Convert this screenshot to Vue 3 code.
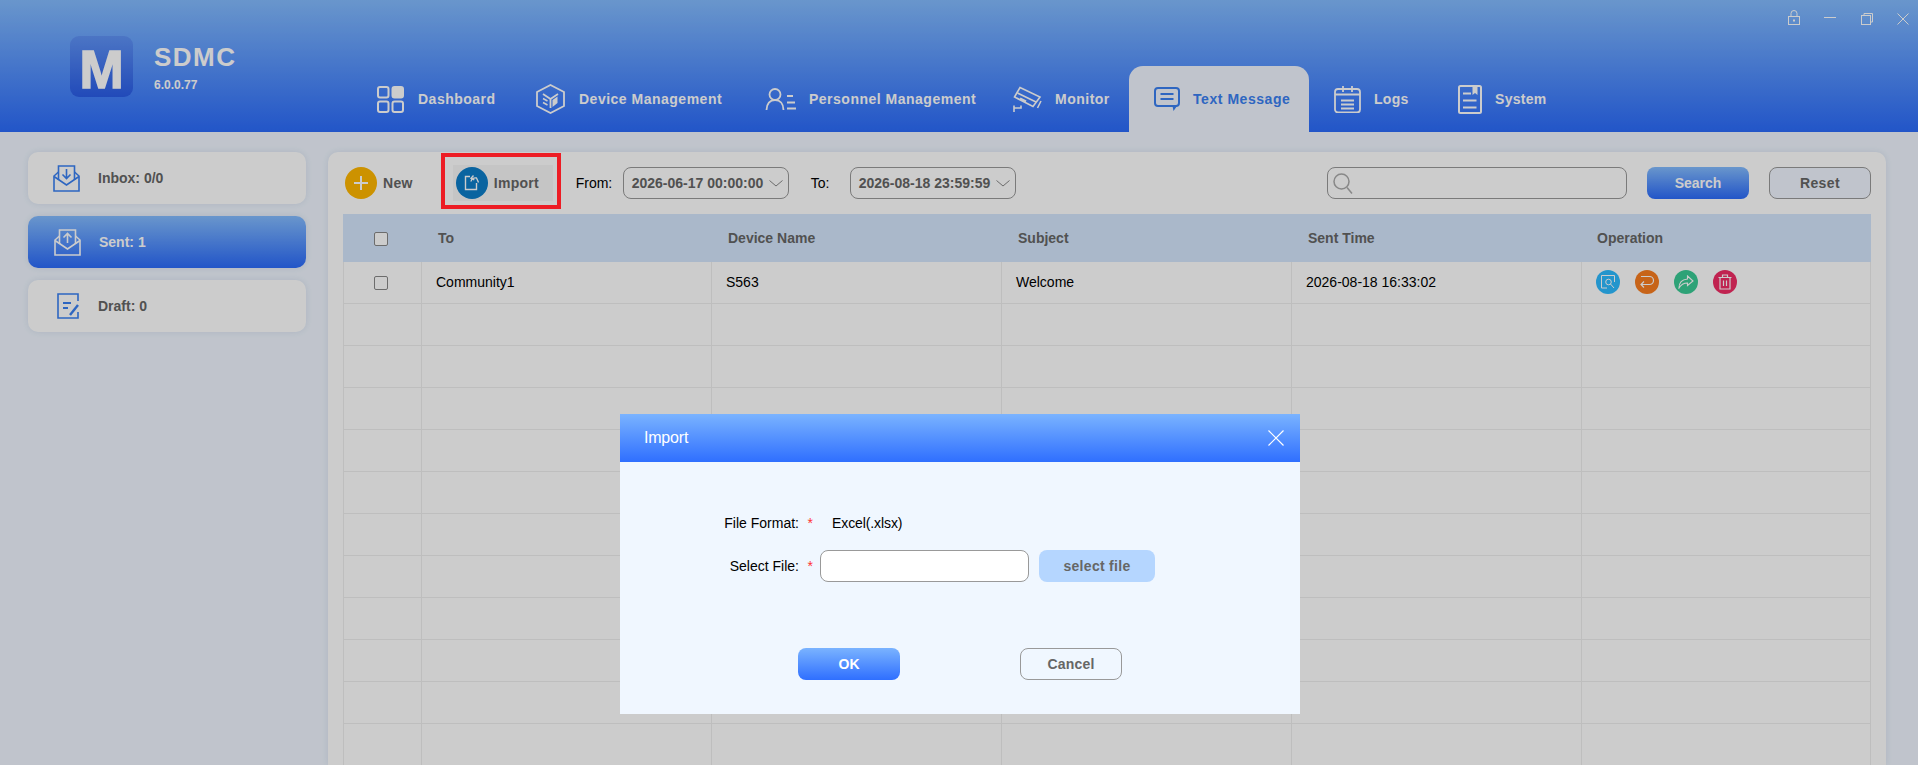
<template>
  <div class="app">
    <header class="top">
      <div class="brand">
        <div class="logo">M</div>
        <div class="brand-text">
          <div class="brand-name">SDMC</div>
          <div class="brand-ver">6.0.0.77</div>
        </div>
      </div>
      <div class="top-right">
        <div class="win">
          <svg width="12" height="15" viewBox="0 0 12 15" fill="none" stroke="currentColor"><rect x=".5" y="6.5" width="11" height="8" /><path d="M3 6.5V3.5a3 3 0 016 0v3" /><rect x="5" y="9.5" width="2" height="2" fill="currentColor" stroke="none" /></svg>
          <svg class="w-min" width="12" height="15" viewBox="0 0 12 15" fill="none" stroke="currentColor"><path d="M0 7.5h12" /></svg>
          <svg class="w-max" width="12" height="12" viewBox="0 0 12 12" fill="none" stroke="currentColor"><rect x=".5" y="2.5" width="9" height="9" /><path d="M3 2.500V.5h8.500V9H9.500" /></svg>
          <svg class="w-close" width="12" height="12" viewBox="0 0 12 12" fill="none" stroke="currentColor"><path d="M.5.500l11 11M11.500.500l-11 11" /></svg>
        </div>
        <nav class="nav">
          <a class="tab">
            <svg class="dash" width="27" height="27" viewBox="0 0 27 27" fill="none" stroke="currentColor" stroke-width="2"><rect x="1" y="1" width="10.500" height="10.500" rx="2" /><rect x="15.500" y="1" width="10.500" height="10.500" rx="2" fill="currentColor" /><rect x="1" y="15.500" width="10.500" height="10.500" rx="2" /><rect x="15.500" y="15.500" width="10.500" height="10.500" rx="2" /></svg>
            <span>Dashboard</span>
          </a>
          <a class="tab">
            <svg width="31" height="30" viewBox="0 0 31 30" fill="none" stroke="currentColor" stroke-width="1.800"><path d="M15.500 1L29 8v14l-13.500 7L2 22V8z" /><path d="M15.500 24v-9L23 10M15.500 15L8 10" /><path d="M17.500 16l5-3.500v6.500l-5 4z" fill="currentColor" stroke="none" /><path d="M8 14.500l4.500 2.500M8 18.500l4.500 2.500" stroke-width="1.500" /></svg>
            <span>Device Management</span>
          </a>
          <a class="tab">
            <svg width="31" height="22" viewBox="0 0 31 22" fill="none" stroke="currentColor" stroke-width="1.800"><circle cx="10" cy="6.500" r="5.500" /><path d="M1.500 22c0-6.500 3.500-10 8.500-10s8.500 3.500 8.500 10" /><path d="M22 8h6M22 14.500h8M22 20.500h9" stroke-width="2" /></svg>
            <span>Personnel Management</span>
          </a>
          <a class="tab">
            <svg width="29" height="26" viewBox="0 0 29 26" fill="none" stroke="currentColor" stroke-width="1.600"><path d="M7 1.500L27 11l-7 9.500L1.500 11z" /><path d="M4.500 7L23 16" /><path d="M7 12.500l6 3" stroke-width="2.500" /><path d="M1 19.500V26M1 22h7v-2.500M28 15l-3.500 7" /></svg>
            <span>Monitor</span>
          </a>
          <a class="tab active">
            <svg width="26" height="24" viewBox="0 0 26 24" fill="none" stroke="currentColor" stroke-width="2"><rect x="1" y="1" width="24" height="18" rx="3" /><path d="M6.500 7h13M6.500 12h13" /><path d="M15 19h8l-3.500 5-1-5z" fill="currentColor" stroke="none" /></svg>
            <span>Text Message</span>
          </a>
          <a class="tab">
            <svg width="27" height="27" viewBox="0 0 27 27" fill="none" stroke="currentColor" stroke-width="1.800"><rect x="1" y="3" width="25" height="23.500" rx="3" /><path d="M1 8.500h25M9 0v6M18 0v6M7 14.500h13M7 18.500h13M7 22.500h13" /></svg>
            <span>Logs</span>
          </a>
          <a class="tab">
            <svg width="24" height="29" viewBox="0 0 24 29" fill="none" stroke="currentColor" stroke-width="2"><rect x="1" y="1" width="22" height="27" rx="1.500" /><path d="M5 8.500h8M5 15.500h13.500M5 22.500h13.500" /><path d="M14.500 1h5v9l-2.500-2-2.500 2z" fill="currentColor" stroke="none" /></svg>
            <span>System</span>
          </a>
        </nav>
      </div>
    </header>

    <main class="page">
      <aside class="side">
        <div class="side-item">
          <svg class="side-ico" width="27" height="27" viewBox="0 0 27 27" fill="none" stroke="currentColor" stroke-width="1.600"><path d="M5.500 15V1h16v14" /><path d="M5.500 7L1 11v15h25V11l-4.500-4" /><path d="M1 11.500L13.500 20 26 11.500" /><path d="M13.500 4v9M9.500 9.500l4 4 4-4" /></svg>
          <span>Inbox: 0/0</span>
        </div>
        <div class="side-item on">
          <svg class="side-ico" width="27" height="27" viewBox="0 0 27 27" fill="none" stroke="currentColor" stroke-width="1.600"><path d="M5.500 15V1h16v14" /><path d="M5.500 7L1 11v15h25V11l-4.500-4" /><path d="M1 11.500L13.500 20 26 11.500" /><path d="M13.500 14V5M9.500 8.500l4-4 4 4" /></svg>
          <span>Sent: 1</span>
        </div>
        <div class="side-item">
          <svg class="side-ico draft" width="22" height="26" viewBox="0 0 22 26" fill="none" stroke="currentColor" stroke-width="1.600"><path d="M21 8V1H1v24h20v-6" /><path d="M6 10h8M6 15h5" stroke-width="2" /><path d="M13 22l8-10" stroke-width="2.400" /></svg>
          <span>Draft: 0</span>
        </div>
      </aside>

      <section class="card">
        <div class="toolbar">
          <div class="tool">
            <span class="circle new">
              <svg width="16" height="16" viewBox="0 0 16 16" stroke="currentColor" stroke-width="2"><path d="M8 1v14M1 8h14" /></svg>
            </span>
            <span>New</span>
          </div>
          <div class="tool import">
            <span class="circle imp">
              <svg width="18" height="18" viewBox="0 0 18 18" fill="none" stroke="currentColor" stroke-width="1.400"><path d="M7 2.500H2.500v13h11V9" /><path d="M8 7.500C8.500 4.500 11 3.500 13.500 4l2 4.500" /><path d="M10.500 1.500L8 4.200l3.300 1.800" /></svg>
            </span>
            <span>Import</span>
            <i class="mark"></i>
          </div>
          <label class="lbl from">From:</label>
          <div class="date">
            <span>2026-06-17 00:00:00</span>
            <svg width="14" height="7" viewBox="0 0 14 7" fill="none" stroke="currentColor"><path d="M.5.500L7 6l6.500-5.500" /></svg>
          </div>
          <label class="lbl to">To:</label>
          <div class="date">
            <span>2026-08-18 23:59:59</span>
            <svg width="14" height="7" viewBox="0 0 14 7" fill="none" stroke="currentColor"><path d="M.5.500L7 6l6.500-5.500" /></svg>
          </div>
          <div class="search">
            <svg width="20" height="21" viewBox="0 0 20 21" fill="none" stroke="currentColor" stroke-width="1.500"><circle cx="8.500" cy="8.500" r="7.500" /><path d="M14 14.500l5 6" /></svg>
          </div>
          <button class="btn primary">Search</button>
          <button class="btn plain">Reset</button>
        </div>

        <table class="grid">
          <colgroup>
            <col style="width:79px" />
            <col v-for="c in columns" :key="c" :style="{ width: c === 'Operation' ? '289px' : '290px' }" />
          </colgroup>
          <thead>
            <tr>
              <th class="chk"><i class="box"></i></th>
              <th v-for="c in columns" :key="c">{{ c }}</th>
            </tr>
          </thead>
          <tbody>
            <tr>
              <td class="chk"><i class="box"></i></td>
              <td>Community1</td>
              <td>S563</td>
              <td>Welcome</td>
              <td>2026-08-18 16:33:02</td>
              <td>
                <div class="ops">
                  <span class="op blue">
                    <svg width="14" height="14" viewBox="0 0 14 14" fill="none" stroke="currentColor"><path d="M6 13H.5V.5h13V7" /><circle cx="7.500" cy="7" r="2.800" /><path d="M9.500 9l3.500 4" /></svg>
                  </span>
                  <span class="op orange">
                    <svg width="16" height="14" viewBox="0 0 16 14" fill="none" stroke="currentColor" stroke-width="1.200"><path d="M2 1.500h8.500a4 4 0 010 8H2" /><path d="M5 6.500l-3 3 3 3" /></svg>
                  </span>
                  <span class="op green">
                    <svg width="16" height="14" viewBox="0 0 16 14" fill="none" stroke="currentColor" stroke-width="1.100"><path d="M9.500 1L15 6l-5.500 4.500V8C6 8 3 9.500 1 13c0-5 3-8.500 8.500-9z" /></svg>
                  </span>
                  <span class="op red">
                    <svg width="14" height="16" viewBox="0 0 14 16" fill="none" stroke="currentColor" stroke-width="1.200"><path d="M.5 3.500h13M4.500 3.500v-2.500h5v2.500M2 3.500V15h10V3.500M5.500 6.500v5.500M8.500 6.500v5.500" /></svg>
                  </span>
                </div>
              </td>
            </tr>
            <tr v-for="n in emptyRows" :key="n">
              <td v-for="k in 6" :key="k"></td>
            </tr>
          </tbody>
        </table>
      </section>
    </main>

    <div class="mask">
      <div class="dialog">
        <div class="dlg-head">
          <span>Import</span>
          <svg width="16" height="16" viewBox="0 0 16 16" fill="none" stroke="currentColor" stroke-width="1.200"><path d="M.5.500l15 15M15.500.500l-15 15" /></svg>
        </div>
        <div class="dlg-body">
          <div class="form">
            <div class="f-label">File Format:</div>
            <div class="star">*</div>
            <div class="f-value">Excel(.xlsx)</div>
            <div class="f-label">Select File:</div>
            <div class="star">*</div>
            <div class="f-file">
              <div class="file-input"></div>
              <button class="file-btn">select file</button>
            </div>
          </div>
          <div class="dlg-foot">
            <button class="dbtn ok">OK</button>
            <button class="dbtn cancel">Cancel</button>
          </div>
        </div>
      </div>
    </div>
  </div>
</template>

<script setup>
const columns = ['To', 'Device Name', 'Subject', 'Sent Time', 'Operation']
const emptyRows = 11
</script>

<style>
html, body { margin: 0; height: 100%; overflow: hidden; }
</style>

<style scoped>
.app {
  height: 765px;
  overflow: hidden;
  display: flex;
  flex-direction: column;
  font-family: "Liberation Sans", Arial, sans-serif;
  font-size: 14px;
  color: #000;
  background: #f0f6ff;
}

.top {
  flex: none;
  height: 132px;
  display: flex;
  background: linear-gradient(#84bcff, #2b6bfb);
}
.brand {
  width: 357px;
  flex: none;
  box-sizing: border-box;
  padding: 36px 0 0 70px;
  display: flex;
  gap: 21px;
  color: #fff;
}
.logo {
  width: 63px;
  height: 61px;
  border-radius: 9px;
  background: linear-gradient(#5f93f6, #2a5de8);
  color: #fff;
  font-weight: 700;
  font-size: 53px;
  line-height: 67px;
  text-align: center;
  -webkit-text-stroke: 1.500px #fff;
}
.brand-name {
  margin-top: 6px;
  font-size: 26px;
  line-height: 30px;
  font-weight: 700;
  letter-spacing: 1.500px;
}
.brand-ver {
  margin-top: 6px;
  font-size: 12px;
  line-height: 14px;
  font-weight: 700;
}
.top-right {
  flex: 1;
  display: flex;
  flex-direction: column;
}
.win {
  height: 66px;
  display: flex;
  align-items: flex-start;
  justify-content: flex-end;
  padding: 10px 9px 0 0;
  box-sizing: border-box;
  color: #fff;
}
.win svg { margin-left: 24px; flex: none; }
.win .w-max { margin-top: 3px; margin-left: 25px; }
.win .w-close { margin-top: 3px; margin-left: 24px; }

.nav {
  height: 66px;
  display: grid;
  grid-template-columns: 158px 230px 248px 136px 180px 125px 132px;
}
.tab {
  display: flex;
  align-items: center;
  gap: 13px;
  padding-left: 20px;
  color: #fff;
  font-weight: 700;
  font-size: 14px;
  letter-spacing: .5px;
}
.tab svg { flex: none; }
.tab .dash { margin-right: 1px; }
.tab:nth-child(n+5) { padding-left: 25px; }
.tab:nth-child(n+6) { letter-spacing: .3px; }
.tab:last-child { padding-left: 24px; }
.tab.active {
  background: #f0f6ff;
  color: #3a80f2;
  border-radius: 14px 14px 0 0;
  letter-spacing: .55px;
}

.page {
  flex: 1;
  min-height: 0;
  display: flex;
  gap: 22px;
  padding: 20px 32px 0 28px;
}
.side {
  width: 278px;
  flex: none;
  display: flex;
  flex-direction: column;
  gap: 12px;
}
.side-item {
  height: 52px;
  display: flex;
  align-items: center;
  gap: 18px;
  padding-left: 25px;
  box-sizing: border-box;
  background: #fff;
  border-radius: 10px;
  box-shadow: 0 0 6px rgba(60, 90, 150, .12);
  font-weight: 700;
  color: #666;
}
.side-ico { color: #3a80f2; flex: none; }
.side-ico.draft { margin-left: 4px; margin-right: 1px; }
.side-item.on {
  background: linear-gradient(#84bcff, #2b6bfb);
  color: #fff;
  padding-left: 26px;
}
.side-item.on .side-ico { color: #fff; }

.card {
  flex: 1;
  min-width: 0;
  box-sizing: border-box;
  padding: 0 15px;
  background: #fff;
  border-radius: 10px 10px 0 0;
  box-shadow: 0 0 6px rgba(60, 90, 150, .12);
}
.toolbar {
  height: 62px;
  display: flex;
  align-items: center;
  padding-left: 2px;
}
.tool {
  position: relative;
  display: flex;
  align-items: center;
  gap: 6px;
  font-weight: 700;
  color: #666;
  letter-spacing: .3px;
}
.circle {
  width: 32px;
  height: 32px;
  border-radius: 50%;
  display: flex;
  align-items: center;
  justify-content: center;
  color: #fff;
}
.circle.new { background: #ffb700; }
.circle.imp { background: #0d7dc8; }
.tool.import {
  margin-left: 40px;
  width: 100px;
  height: 36px;
  box-sizing: border-box;
  padding-left: 3px;
  background: #f7f7f7;
}
.mark {
  position: absolute;
  left: -12px;
  top: -12px;
  width: 120px;
  height: 56px;
  box-sizing: border-box;
  border: 4px solid #ed1c24;
  z-index: 20;
}
.lbl { flex: none; }
.lbl.from { margin-left: 23px; width: 47px; }
.lbl.to { margin-left: 22px; width: 39px; }
.date {
  width: 166px;
  height: 32px;
  box-sizing: border-box;
  padding: 0 5px 0 8px;
  display: flex;
  align-items: center;
  justify-content: space-between;
  border: 1px solid #999;
  border-radius: 8px;
  font-weight: 700;
  color: #666;
}
.date svg { flex: none; color: #888; }
.search {
  margin-left: auto;
  width: 300px;
  height: 32px;
  box-sizing: border-box;
  padding-left: 5px;
  display: flex;
  align-items: center;
  border: 1px solid #999;
  border-radius: 8px;
  color: #aaa;
}
.btn {
  height: 32px;
  box-sizing: border-box;
  border-radius: 8px;
  font: 700 14px "Liberation Sans", Arial, sans-serif;
  padding: 0;
}
.btn.primary {
  width: 102px;
  margin-left: 20px;
  border: 0;
  color: #fff;
  background: linear-gradient(#84bcff, #2b6bfb);
}
.btn.plain {
  width: 102px;
  margin-left: 20px;
  border: 1px solid #999;
  color: #666;
  background: #f0f6ff;
  letter-spacing: .4px;
}

.grid {
  width: 1528px;
  table-layout: fixed;
  border-collapse: separate;
  border-spacing: 0;
}
.grid th {
  height: 48px;
  padding: 0 0 0 16px;
  box-sizing: border-box;
  text-align: left;
  font-weight: 700;
  color: #666;
  background: #d5e7fd;
}
.grid th:last-child { padding-left: 15px; }
.grid td {
  height: 42px;
  padding: 0 0 2px 14px;
  box-sizing: border-box;
  border-right: 1px solid #eee;
  border-bottom: 1px solid #eee;
}
.grid td:first-child { border-left: 1px solid #eee; }
.grid .chk { padding: 0; text-align: center; }
.grid td.chk { padding-bottom: 2px; }
.box {
  display: inline-block;
  vertical-align: middle;
  width: 14px;
  height: 14px;
  box-sizing: border-box;
  border: 1px solid #888;
  border-radius: 2px;
  background: #fff;
  margin-right: 3px;
}
.ops {
  display: flex;
  gap: 15px;
}
.op {
  width: 24px;
  height: 24px;
  border-radius: 50%;
  display: flex;
  align-items: center;
  justify-content: center;
  color: #fff;
}
.op.blue { background: #2dbbff; }
.op.orange { background: #f97e20; }
.op.green { background: #3acb95; }
.op.red { background: #f02c64; }

.mask {
  position: fixed;
  inset: 0;
  z-index: 10;
  background: rgba(0, 0, 0, .2);
  display: flex;
  justify-content: center;
  padding: 414px 0 0 2px;
  box-sizing: border-box;
}
.dialog {
  width: 680px;
  height: 300px;
  background: #f0f7ff;
}
.dlg-head {
  height: 48px;
  display: flex;
  align-items: center;
  justify-content: space-between;
  padding: 0 16px 0 24px;
  background: linear-gradient(#7ab3ff, #2f6fff);
  color: #fff;
  font-size: 16px;
  letter-spacing: -.2px;
}
.dlg-body { padding-top: 45px; }
.form {
  display: grid;
  grid-template-columns: 180px 20px auto;
  grid-auto-rows: 32px;
  row-gap: 11px;
  align-items: center;
}
.f-label { text-align: right; padding-right: 1px; }
.star { color: #f33; text-align: right; padding-right: 7px; }
.f-value { padding-left: 12px; letter-spacing: -.1px; }
.f-file {
  display: flex;
  gap: 10px;
}
.file-input {
  width: 209px;
  height: 32px;
  box-sizing: border-box;
  background: #fff;
  border: 1px solid #999;
  border-radius: 8px;
}
.file-btn {
  width: 116px;
  height: 32px;
  border: 0;
  border-radius: 8px;
  background: #b5d6ff;
  color: #666;
  font: 700 14px "Liberation Sans", Arial, sans-serif;
  letter-spacing: .3px;
  padding: 0;
}
.dlg-foot {
  margin-top: 66px;
  display: flex;
  justify-content: center;
  gap: 120px;
}
.dbtn {
  width: 102px;
  height: 32px;
  box-sizing: border-box;
  border-radius: 8px;
  font: 700 14px "Liberation Sans", Arial, sans-serif;
  padding: 0;
}
.dbtn.ok {
  border: 0;
  color: #fff;
  background: linear-gradient(#7ab3ff, #2f6fff);
}
.dbtn.cancel {
  border: 1px solid #999;
  color: #666;
  background: transparent;
  letter-spacing: .2px;
}
</style>
